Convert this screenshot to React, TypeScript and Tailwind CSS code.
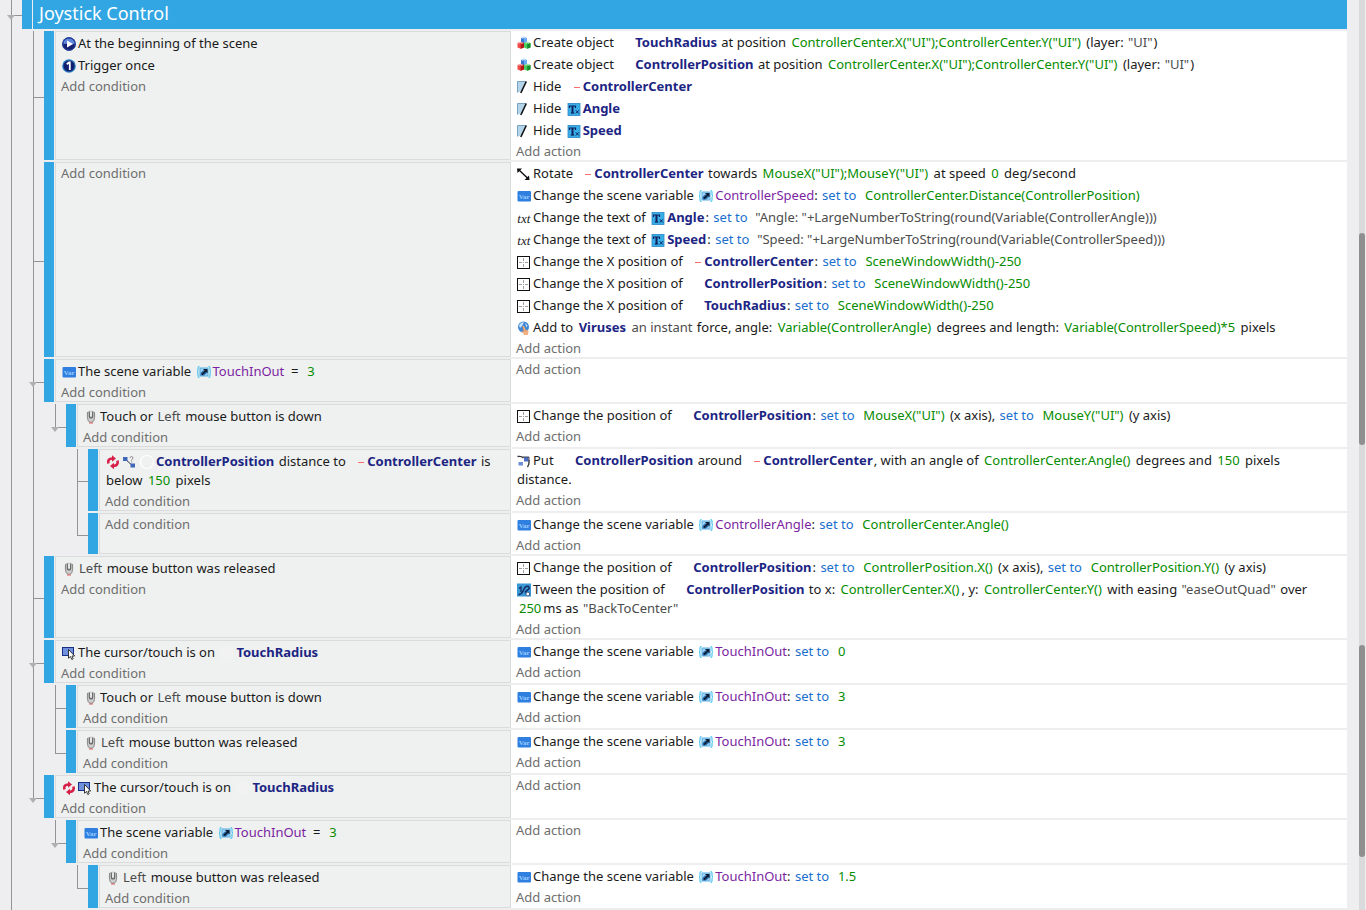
import type { ReactNode } from "react";

type Rail = "none" | "full" | "branch" | "end";

interface EventRowProps {
  rails: Rail[];
  folded?: boolean;
  conditions?: ReactNode;
  actions?: ReactNode;
}

/* ---------- icons ---------- */

function Svg({ children }: { children: ReactNode }) {
  return (
    <svg
      viewBox="1 0 16 16"
      width={16}
      height={16}
      aria-hidden="true"
      className="inline-block h-4 w-4 align-[-4px]"
    >
      {children}
    </svg>
  );
}

const PlayIcon = () => (
  <Svg>
    <circle cx="8" cy="8" r="6.8" fill="#16226f" />
    <path d="M2.100 7.500a6 6 0 0 1 11.800 0c-2 1.500-4 .5-6 .1-2-.4-4 .9-5.800-.1Z" fill="#5f86dc" />
    <circle cx="8" cy="8" r="6.300" fill="none" stroke="#2446a8" />
    <path d="M6 4.500 12 8l-6 3.500Z" fill="#fff" />
  </Svg>
);

const OnceIcon = () => (
  <Svg>
    <circle cx="8" cy="8" r="6.800" fill="#2a7fc4" />
    <circle cx="8" cy="8" r="5.600" fill="#101f6e" />
    <path d="M5.800 6.300 8 4.500h.8V12" fill="none" stroke="#fff" strokeWidth="1.800" />
  </Svg>
);

const CreateIcon = () => (
  <Svg>
    <path d="M5 3 8 1.500 11 3v5H5Z" fill="#6aaaf0" />
    <path d="m5 3 3 1.200V8H5Z" fill="#3a78d0" />
    <path d="m1.500 8 3.200-1.200L8 8v4.500l-3.300 1.200-3.200-1.200Z" fill="#f04a4a" />
    <path d="M4.700 9.300 8 8v4.500l-3.300 1.200Z" fill="#b01818" />
    <path d="m8 8 3.200-1.200L14.500 8v4.500l-3.300 1.200L8 12.500Z" fill="#4bcc5e" />
    <path d="M11.200 9.300 14.500 8v4.500l-3.300 1.200Z" fill="#148a2c" />
    <path d="m2.500 8.200 2.200-.700 2 .7M9.200 8.200l2-.700 2 .7M6 3.100 8 2.300l1.800.8" stroke="#ffffffa0" fill="none" />
  </Svg>
);

const HideIcon = () => (
  <Svg>
    <path d="M1.500 2.500H10L6.500 12l-5 1.500Z" fill="#b4d4ea" />
    <path d="M1.500 2.500H10M1.500 2.500v11" stroke="#5f8fb5" strokeWidth=".8" fill="none" />
    <path d="M10.300 2.500 4.800 14" stroke="#111" strokeWidth="1.600" />
  </Svg>
);

const TextObjectIcon = () => (
  <Svg>
    <rect x="2" y="2.500" width="12" height="12" fill="#38aee8" stroke="#2a86c4" strokeWidth=".8" />
    <path d="M3.500 7V5h6v2" stroke="#10205c" strokeWidth="1.200" fill="none" />
    <path d="M6.500 5v7" stroke="#10205c" strokeWidth="2" />
    <path d="M4.800 12h3.400" stroke="#10205c" strokeWidth="1.200" />
    <path d="m9.800 9.300 3 3.200M12.800 9.300l-3 3.200" stroke="#10205c" strokeWidth="1" />
  </Svg>
);

const RotateIcon = () => (
  <Svg>
    <path d="m3 4 9 8.500" stroke="#111" strokeWidth="1.400" />
    <path d="M1 2.500h5L1.500 7ZM13.500 14h-5L13 9.500Z" fill="#111" />
  </Svg>
);

const VarIcon = () => (
  <Svg>
    <rect x="1.500" y="3" width="13.500" height="10.500" rx="1" fill="#2f7fe0" />
    <text
      x="8.200"
      y="11"
      textAnchor="middle"
      fontSize="7"
      fontWeight="bold"
      fill="#9accff"
      fontFamily="Liberation Serif, serif"
    >
      Var
    </text>
  </Svg>
);

const VarTypeIcon = () => (
  <Svg>
    <path
      d="M3.500 2.500q-1.500 0-1.500 1.500v2.500Q2 8 1 8q1 0 1 1.500V12q0 1.500 1.500 1.500M12.500 2.500q1.500 0 1.500 1.500v2.500Q14 8 15 8q-1 0-1 1.500V12q0 1.500-1.500 1.500"
      fill="none"
      stroke="#3dc0ee"
      strokeWidth="1.100"
    />
    <rect x="4" y="4" width="8" height="8" fill="#9ed3f7" stroke="#56aee0" />
    <path d="M4.500 11.500V9L7 6.500h4.500v2L8 11.500Z" fill="#2c6fae" />
    <path d="M7 5h4.500v4L10 7.800 6.500 11.200 5.300 10l3.400-3.300Z" fill="#0d1c33" />
  </Svg>
);

const TxtIcon = () => (
  <Svg>
    <text
      x="7.800"
      y="12.500"
      textAnchor="middle"
      fontSize="13"
      fontStyle="italic"
      fill="#222"
      fontFamily="Liberation Serif, serif"
    >
      txt
    </text>
  </Svg>
);

const PositionIcon = () => (
  <Svg>
    <rect x="1.500" y="2.500" width="12" height="12" fill="#fff" stroke="#111" />
    <path d="M7.500 4v3M7.500 10v3M3 8.500h3M9 8.500h3" stroke="#a0a0a0" />
    <path d="M7.500 8v1" stroke="#a0a0a0" />
  </Svg>
);

const ForceIcon = () => (
  <Svg>
    <circle cx="7.500" cy="7" r="5.500" fill="#3f86d4" />
    <path d="M3 5.500Q5 2 8 2.200L6 6 4 8ZM9 3l2.500 2.500-1 2Z" fill="#c9e4fa" />
    <path d="M5 10.500 7.500 12 6.500 6H8l1.500 3.500 3 1.200-.5 4.300H8.200Z" fill="#f2b184" />
    <path d="m6.500 6 1.500 5M9.500 9.500l.5 2" stroke="#b9754a" strokeWidth=".6" fill="none" />
  </Svg>
);

const MouseIcon = () => (
  <Svg>
    <path d="M4 3q-.500 5 .5 8.500Q5.500 14 8 14t3.500-2.500q1-3.500.5-8.500-1.500-1.500-4-1.500T4 3Z" fill="#cfcfcf" />
    <path d="M4.500 3q-.500 5.500.6 8.300Q6.300 13.300 8 13.300t2.900-2Q12 8.500 11.500 3" fill="none" stroke="#8a8a8a" />
    <path d="M6.300 2.500v5q.4 1.500 1.700 1.500t1.700-1.500v-5" fill="none" stroke="#5c5c5c" strokeWidth="1.100" />
    <path d="M8 3v4" stroke="#fff" />
    <path d="M6 14h4" stroke="#e06060" />
  </Svg>
);

const InvertIcon = () => (
  <Svg>
    <path d="M3.500 9.500Q2 4.800 7.500 4.500" fill="none" stroke="#d81f48" strokeWidth="2.600" />
    <path d="M7 1.200 11 4.500 7 7.800Z" fill="#d81f48" />
    <path d="M12.500 6.500q1.200 5-4 5.500" fill="none" stroke="#d81f48" strokeWidth="2.600" />
    <path d="M9 8.700 5 12l4 3.200Z" fill="#d81f48" />
  </Svg>
);

const DistanceIcon = () => (
  <Svg>
    <path d="m4 5 8 7" stroke="#334" strokeWidth="1" />
    <rect x="2" y="3" width="4.500" height="4" fill="#3f68b8" />
    <rect x="9.500" y="9.500" width="4.500" height="4" fill="#3f68b8" />
    <path d="M9 4q.3-1.500 1.500-1.500T12 4q0 .8-1.300 1.500v1.200M10.700 7.500v1" fill="none" stroke="#888" />
  </Svg>
);

const CursorIcon = () => (
  <Svg>
    <rect x="1.500" y="2.500" width="11" height="8" fill="#6f90dc" stroke="#1b2f86" />
    <path d="M7.500 4.500v8.700l2-1.700 1.300 3 1.400-.7-1.200-2.800h2.700Z" fill="#fff" stroke="#222" strokeWidth=".9" />
  </Svg>
);

const PutIcon = () => (
  <Svg>
    <path d="M1.500 3.500q4.500-.5 6 1.500M13 7q.5 4.500-1.500 7" fill="none" stroke="#333" strokeWidth="1.400" />
    <rect x="8" y="4" width="4.500" height="4.500" fill="#4a6fc0" />
    <rect x="2.500" y="9" width="4.500" height="3.500" fill="#6c8fd6" />
    <path d="M7 4h6v4" fill="none" stroke="#445" />
  </Svg>
);

const TweenIcon = () => (
  <Svg>
    <rect x="1" y="1.500" width="14" height="13" fill="#3a97d6" />
    <path d="M2.500 12.500Q5 13 6.500 10L9 5.500q1.500-2 3.500-1 1.500 1.500-.5 3.200-1.800 1.300-3 2.800" fill="none" stroke="#12295e" strokeWidth="1.500" />
    <path d="M3 6.500 5 5v5" fill="none" stroke="#12295e" strokeWidth="1.200" />
    <circle cx="11.800" cy="12" r="1.900" fill="#fff" stroke="#12295e" strokeWidth=".7" />
  </Svg>
);

/* ---------- sentence fragments ---------- */

function Obj({ icon, children }: { icon?: "dash" | "text" | "ring" | "dot" | "bare"; children: ReactNode }) {
  return (
    <span className="pr-px pl-0.5 font-bold whitespace-nowrap text-[#1c2583]">
      {icon === "text" && <TextObjectIcon />}
      {icon === "dash" && (
        <Svg>
          <path d="M8 8.500h6" stroke="#ff6b6b" />
        </Svg>
      )}
      {icon === "ring" && (
        <Svg>
          <circle cx="8" cy="8" r="6.500" fill="none" stroke="#fff" strokeWidth="1.200" />
        </Svg>
      )}
      {icon === "dot" && (
        <Svg>
          <circle cx="8" cy="8" r="7" fill="#f2f2f2" />
        </Svg>
      )}
      {!icon && <span className="inline-block w-4" />}
      {children}
    </span>
  );
}

const Expr = ({ children }: { children: ReactNode }) => <span className="px-0.5 text-[#068c00]">{children}</span>;
const Op = ({ children }: { children: ReactNode }) => <span className="pl-px text-[#1a6fce]">{children}</span>;
const Str = ({ children }: { children: ReactNode }) => <span className="px-px text-[#4c4c4c]">{children}</span>;

const SceneVar = ({ children }: { children: ReactNode }) => (
  <span className="pl-0.5 whitespace-nowrap text-[#7c1fa2]">
    <VarTypeIcon />
    {children}
  </span>
);

function Line({ icon, children }: { icon: ReactNode; children: ReactNode }) {
  return (
    <p className="pt-0.5 pr-3 pb-px pl-px leading-[19px]">
      {icon}
      {children}
    </p>
  );
}

function SetVariable({ name, value }: { name: string; value: string }) {
  return (
    <Line icon={<VarIcon />}>
      Change the scene variable <SceneVar>{name}</SceneVar>: <Op>set to</Op>&nbsp; <Expr>{value}</Expr>
    </Line>
  );
}

function SetText({ name, value }: { name: string; value: string }) {
  return (
    <Line icon={<TxtIcon />}>
      Change the text of <Obj icon="text">{name}</Obj>: <Op>set to</Op>&nbsp; <Str>{value}</Str>
    </Line>
  );
}

function SetX({ name, icon }: { name: string; icon?: "dash" }) {
  return (
    <Line icon={<PositionIcon />}>
      Change the X position of <Obj icon={icon}>{name}</Obj>: <Op>set to</Op>&nbsp;{" "}
      <Expr>SceneWindowWidth()-250</Expr>
    </Line>
  );
}

function SetPosition({ x, y }: { x: string; y: string }) {
  return (
    <Line icon={<PositionIcon />}>
      Change the position of <Obj>ControllerPosition</Obj>: <Op>set to</Op>&nbsp; <Expr>{x}</Expr> (x axis),{" "}
      <Op>set to</Op>&nbsp; <Expr>{y}</Expr> (y axis)
    </Line>
  );
}

function CreateObject({ name }: { name: string }) {
  return (
    <Line icon={<CreateIcon />}>
      Create object <Obj>{name}</Obj> at position{" "}
      <Expr>ControllerCenter.X("UI");ControllerCenter.Y("UI")</Expr> (layer: <Str>"UI"</Str>)
    </Line>
  );
}

const VariableIsThree = () => (
  <Line icon={<VarIcon />}>
    The scene variable <SceneVar>TouchInOut</SceneVar>&nbsp; =&nbsp; <Expr>3</Expr>
  </Line>
);

const ButtonDown = () => (
  <Line icon={<MouseIcon />}>
    Touch or <Str>Left</Str> mouse button is down
  </Line>
);

const ButtonReleased = () => (
  <Line icon={<MouseIcon />}>
    <Str>Left</Str> mouse button was released
  </Line>
);

const CursorOn = ({ inverted }: { inverted?: boolean }) => (
  <Line
    icon={
      <>
        {inverted && <InvertIcon />}
        <CursorIcon />
      </>
    }
  >
    The cursor/touch is on <Obj icon="dot">TouchRadius</Obj>
  </Line>
);

/* ---------- event sheet ---------- */

function RailCell({ rail, arrow }: { rail: Rail; arrow?: boolean }) {
  const joined = rail === "branch" || rail === "end";
  return (
    <div className="relative w-[22px] shrink-0">
      {rail !== "none" && (
        <span className={`absolute top-0 left-[11px] w-px bg-[#949497] ${rail === "end" ? "h-1/2" : "h-full"}`} />
      )}
      {joined && <span className="absolute top-1/2 left-[11px] h-px w-[11px] bg-[#949497]" />}
      {arrow && (
        <span className="absolute top-1/2 left-[7px] border-x-[4px] border-t-[5px] border-x-transparent border-t-[#b0b0b0]" />
      )}
    </div>
  );
}

function AddButton({ children }: { children: ReactNode }) {
  return (
    <button type="button" className="block pt-0.5 leading-[17px] text-[#6e6e6e]">
      {children}
    </button>
  );
}

function EventRow({ rails, folded, conditions, actions }: EventRowProps) {
  return (
    <section className="flex">
      <div className="flex w-[511px] shrink-0">
        {rails.map((rail, i) => (
          <RailCell key={i} rail={rail} arrow={folded && i === rails.length - 1} />
        ))}
        <div className="mr-px mb-0.5 w-2.5 shrink-0 bg-[#32a6e2]" />
        <div className="mb-0.5 min-w-0 flex-1 border border-[#dadcdc] bg-[#eff1f0] px-[5px]">
          {conditions}
          <AddButton>Add condition</AddButton>
        </div>
      </div>
      <div className="mb-0.5 min-w-0 flex-1 bg-white px-[5px]">
        {actions}
        <AddButton>Add action</AddButton>
      </div>
    </section>
  );
}

function ScrollBar() {
  return (
    <div className="mr-px flex w-1.5 shrink-0 flex-col bg-[#dadadc] pt-[233px]">
      <div className="h-[212px] rounded-full bg-[#8f8f8f]" />
      <div className="mt-[200px] h-[212px] rounded-full bg-[#8f8f8f]" />
    </div>
  );
}

export default function App() {
  return (
    <div className="flex h-screen overflow-hidden bg-[#eeeef0] font-['Noto_Sans','Open_Sans',sans-serif] text-[13px] text-[#1a1a1a]">
      <main className="mr-3 min-w-0 flex-1">
        <header className="-mt-0.5 flex">
          <RailCell rail="branch" arrow />
          <div className="mb-0.5 h-[31px] w-2.5 bg-[#32a6e2]" />
          <h1 className="mb-0.5 ml-px h-[31px] flex-1 bg-[#32a6e2] pl-1.5 text-lg leading-[31px] text-white">
            Joystick Control
          </h1>
        </header>

        <EventRow
          rails={["full", "branch"]}
          conditions={
            <>
              <Line icon={<PlayIcon />}>At the beginning of the scene</Line>
              <Line icon={<OnceIcon />}>Trigger once</Line>
            </>
          }
          actions={
            <>
              <CreateObject name="TouchRadius" />
              <CreateObject name="ControllerPosition" />
              <Line icon={<HideIcon />}>
                Hide <Obj icon="dash">ControllerCenter</Obj>
              </Line>
              <Line icon={<HideIcon />}>
                Hide <Obj icon="text">Angle</Obj>
              </Line>
              <Line icon={<HideIcon />}>
                Hide <Obj icon="text">Speed</Obj>
              </Line>
            </>
          }
        />

        <EventRow
          rails={["full", "branch"]}
          actions={
            <>
              <Line icon={<RotateIcon />}>
                Rotate <Obj icon="dash">ControllerCenter</Obj> towards <Expr>MouseX("UI");MouseY("UI")</Expr> at speed{" "}
                <Expr>0</Expr> deg/second
              </Line>
              <SetVariable name="ControllerSpeed" value="ControllerCenter.Distance(ControllerPosition)" />
              <SetText name="Angle" value={'"Angle: "+LargeNumberToString(round(Variable(ControllerAngle)))'} />
              <SetText name="Speed" value={'"Speed: "+LargeNumberToString(round(Variable(ControllerSpeed)))'} />
              <SetX name="ControllerCenter" icon="dash" />
              <SetX name="ControllerPosition" />
              <SetX name="TouchRadius" />
              <Line icon={<ForceIcon />}>
                Add to <Obj icon="bare">Viruses</Obj> <Str>an instant</Str> force, angle:{" "}
                <Expr>Variable(ControllerAngle)</Expr> degrees and length:{" "}
                <Expr>Variable(ControllerSpeed)*5</Expr> pixels
              </Line>
            </>
          }
        />

        <EventRow rails={["full", "branch"]} folded conditions={<VariableIsThree />} />

        <EventRow
          rails={["full", "full", "end"]}
          folded
          conditions={<ButtonDown />}
          actions={<SetPosition x={'MouseX("UI")'} y={'MouseY("UI")'} />}
        />

        <EventRow
          rails={["full", "full", "none", "branch"]}
          conditions={
            <Line
              icon={
                <>
                  <InvertIcon />
                  <DistanceIcon />
                </>
              }
            >
              <Obj icon="ring">ControllerPosition</Obj> distance to <Obj icon="dash">ControllerCenter</Obj> is below{" "}
              <Expr>150</Expr> pixels
            </Line>
          }
          actions={
            <Line icon={<PutIcon />}>
              Put <Obj>ControllerPosition</Obj> around <Obj icon="dash">ControllerCenter</Obj>, with an angle of{" "}
              <Expr>ControllerCenter.Angle()</Expr> degrees and <Expr>150</Expr> pixels distance.
            </Line>
          }
        />

        <EventRow
          rails={["full", "full", "none", "end"]}
          actions={<SetVariable name="ControllerAngle" value="ControllerCenter.Angle()" />}
        />

        <EventRow
          rails={["full", "branch"]}
          conditions={<ButtonReleased />}
          actions={
            <>
              <SetPosition x="ControllerPosition.X()" y="ControllerPosition.Y()" />
              <Line icon={<TweenIcon />}>
                Tween the position of <Obj>ControllerPosition</Obj> to x: <Expr>ControllerCenter.X()</Expr>, y:{" "}
                <Expr>ControllerCenter.Y()</Expr> with easing <Str>"easeOutQuad"</Str> over <Expr>250</Expr>ms as{" "}
                <Str>"BackToCenter"</Str>
              </Line>
            </>
          }
        />

        <EventRow
          rails={["full", "branch"]}
          folded
          conditions={<CursorOn />}
          actions={<SetVariable name="TouchInOut" value="0" />}
        />
        <EventRow
          rails={["full", "full", "branch"]}
          conditions={<ButtonDown />}
          actions={<SetVariable name="TouchInOut" value="3" />}
        />
        <EventRow
          rails={["full", "full", "end"]}
          conditions={<ButtonReleased />}
          actions={<SetVariable name="TouchInOut" value="3" />}
        />

        <EventRow rails={["full", "end"]} folded conditions={<CursorOn inverted />} />
        <EventRow rails={["full", "none", "end"]} folded conditions={<VariableIsThree />} />
        <EventRow
          rails={["full", "none", "none", "end"]}
          conditions={<ButtonReleased />}
          actions={<SetVariable name="TouchInOut" value="1.5" />}
        />
      </main>
      <ScrollBar />
    </div>
  );
}
